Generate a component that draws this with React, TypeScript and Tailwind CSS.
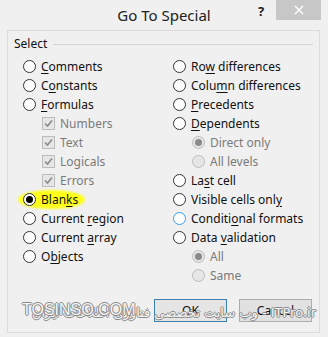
import type { ReactNode } from 'react';

const font = { fontFamily: '"Noto Sans", "DejaVu Sans", sans-serif' };

function Radio({ checked, disabled, focus }: { checked?: boolean; disabled?: boolean; focus?: boolean }) {
  const ring = disabled
    ? 'border-[#bcbcbc] bg-[#e6e6e6]'
    : focus
      ? 'border-[#3d9be8] bg-white'
      : 'border-[#333333] bg-white';
  return (
    <span className={`flex h-[13px] w-[13px] shrink-0 items-center justify-center rounded-full border ${ring}`}>
      {checked && (
        <span className={`h-[7px] w-[7px] rounded-full ${disabled ? 'bg-[#8a8a8a]' : 'bg-black'}`} />
      )}
    </span>
  );
}

function Check() {
  return (
    <span className="flex h-[13px] w-[13px] shrink-0 items-center justify-center border border-[#bcbcbc] bg-[#e6e6e6]">
      <svg width="9" height="9" viewBox="0 0 9 9">
        <path d="M1 4.5 L3.5 7 L8 1.5" fill="none" stroke="#8a8a8a" strokeWidth="1.6" />
      </svg>
    </span>
  );
}

// label with access-key underline
function Label({ text, u, disabled }: { text: string; u?: number; disabled?: boolean }) {
  const color = disabled ? 'text-[#7a7a7a]' : 'text-[#111]';
  if (u === undefined) return <span className={color}>{text}</span>;
  return (
    <span className={color}>
      {text.slice(0, u)}
      <span className="underline underline-offset-2">{text[u]}</span>
      {text.slice(u + 1)}
    </span>
  );
}

function Row({ children, indent }: { children: ReactNode; indent?: boolean }) {
  return (
    <div className={`flex h-[19px] items-center gap-[5px] ${indent ? 'pl-[19px]' : ''}`}>
      {children}
    </div>
  );
}

export default function App() {
  return (
    <div
      className="relative flex h-[337px] w-[328px] flex-col overflow-hidden bg-[#f0f0f0] text-[12px] leading-none"
      style={font}
    >
      {/* TITLE BAR */}
      <div className="relative flex h-[30px] shrink-0 items-center justify-center">
        <span className="text-[15px] text-[#222]">Go To Special</span>
        <span className="absolute left-[258px] top-[5px] text-[13px] font-bold text-[#222]">?</span>
        <div className="absolute left-[276px] top-0 flex h-[20px] w-[45px] items-center justify-center bg-[#c7c7c7]">
          <svg width="10" height="10" viewBox="0 0 10 10">
            <path d="M1 1 L9 9 M9 1 L1 9" stroke="white" strokeWidth="1.4" />
          </svg>
        </div>
      </div>

      {/* PANEL */}
      <div className="mb-[4px] ml-[7px] mr-[8px] flex flex-1 flex-col border border-[#dcdcdc]">
        <div className="mt-[7px] flex h-[12px] items-center gap-[6px] pl-[6px] pr-[6px]">
          <span className="text-[#111]">Select</span>
          <div className="h-px flex-1 bg-[#d5d5d5]" />
        </div>

        <div className="mt-[7px] grid grid-cols-[150px_1fr] pl-[15px]">
          {/* LEFT */}
          <div className="flex flex-col">
            <Row><Radio /><Label text="Comments" u={0} /></Row>
            <Row><Radio /><Label text="Constants" u={1} /></Row>
            <Row><Radio /><Label text="Formulas" u={0} /></Row>
            <Row indent><Check /><Label text="Numbers" disabled /></Row>
            <Row indent><Check /><Label text="Text" disabled /></Row>
            <Row indent><Check /><Label text="Logicals" disabled /></Row>
            <Row indent><Check /><Label text="Errors" disabled /></Row>
            <div className="relative">
              <div className="absolute left-[-5px] top-[0px] h-[19px] w-[67px] rounded-[50%] bg-[#ffff1a] blur-[1px]" />
              <div className="relative">
                <Row><Radio checked /><Label text="Blanks" u={4} /></Row>
              </div>
            </div>
            <Row><Radio /><Label text="Current region" u={8} /></Row>
            <Row><Radio /><Label text="Current array" u={8} /></Row>
            <Row><Radio /><Label text="Objects" u={1} /></Row>
          </div>

          {/* RIGHT */}
          <div className="flex flex-col">
            <Row><Radio /><Label text="Row differences" u={2} /></Row>
            <Row><Radio /><Label text="Column differences" u={4} /></Row>
            <Row><Radio /><Label text="Precedents" u={0} /></Row>
            <Row><Radio /><Label text="Dependents" u={0} /></Row>
            <Row indent><Radio checked disabled /><Label text="Direct only" disabled /></Row>
            <Row indent><Radio disabled /><Label text="All levels" disabled /></Row>
            <Row><Radio /><Label text="Last cell" u={2} /></Row>
            <Row><Radio /><Label text="Visible cells only" u={17} /></Row>
            <Row><Radio focus /><Label text="Conditional formats" u={7} /></Row>
            <Row><Radio /><Label text="Data validation" u={5} /></Row>
            <Row indent><Radio checked disabled /><Label text="All" disabled /></Row>
            <Row indent><Radio disabled /><Label text="Same" disabled /></Row>
          </div>
        </div>

        {/* BUTTONS */}
        <div className="mb-[10px] mt-auto flex justify-end gap-[12px] pr-[7px]">
          <button className="flex h-[23px] w-[73px] items-center justify-center border border-[#3c7fb1] bg-[#e5e5e5] text-[#111]">
            OK
          </button>
          <button className="flex h-[23px] w-[73px] items-center justify-center border border-[#adadad] bg-[#e1e1e1] text-[#111]">
            Cancel
          </button>
        </div>
      </div>

      {/* WATERMARK */}
      <div
        className="absolute left-[10px] top-[306px] w-[306px] whitespace-nowrap text-right text-[13px] leading-none text-[#f4f4f4] [text-shadow:1px_0_0_#8a8a8a,-1px_0_0_#8a8a8a,0_1px_0_#8a8a8a,0_-1px_0_#8a8a8a]"
        dir="rtl"
        style={{ fontFamily: '"DejaVu Sans", sans-serif' }}
      >
        ITPro.ir - وب سایت تخصصی فناوری اطلاعات ایران
      </div>
      <div
        className="absolute left-[22px] top-[302px] whitespace-nowrap text-[16px] leading-none text-[#f4f4f4] [text-shadow:1px_0_0_#8a8a8a,-1px_0_0_#8a8a8a,0_1px_0_#8a8a8a,0_-1px_0_#8a8a8a]"
        style={{ fontFamily: '"Liberation Sans", sans-serif' }}
      >
        TOSINSO.COM
      </div>
    </div>
  );
}
